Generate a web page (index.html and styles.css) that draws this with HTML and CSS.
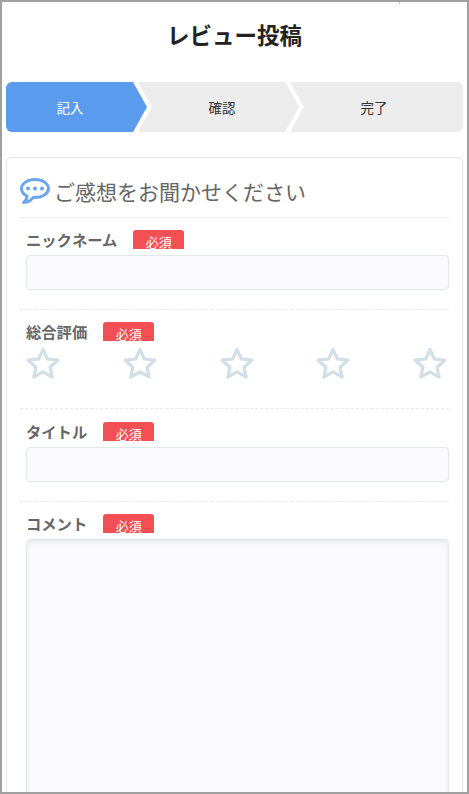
FILE: index.html
```html
<!DOCTYPE html>
<html lang="ja">
<head>
    <meta charset="UTF-8">
    <meta name="viewport" content="width=device-width, initial-scale=1.0">
    <title>レビュー投稿</title>
    <link rel="stylesheet" href="styles.css">
</head>
<body>

    <div class="page">
        <h1 class="page-title">レビュー投稿</h1>

        <ol class="steps">
            <li class="step step-first step-active">記入</li>
            <li class="step step-middle">確認</li>
            <li class="step step-last">完了</li>
        </ol>

        <form class="review-card">
            <h2 class="card-title">
                <svg class="title-icon" viewBox="0 0 30 26" width="30" height="26" aria-hidden="true">
                    <path d="M15 1.5C7.5 1.5 1.5 5.5 1.5 10.5C1.5 14 4 16.5 7 18C7 20.5 6 23 3.5 24.5C7.5 24.5 11 22.5 13 19.5L15 19.5C22.5 19.5 28.5 15.5 28.5 10.5C28.5 5.5 22.5 1.5 15 1.5Z" fill="#fff" stroke="#6aa5ee" stroke-width="3" stroke-linejoin="round"/>
                    <circle cx="8" cy="10.5" r="2" fill="#6aa5ee"/>
                    <circle cx="15" cy="10.5" r="2" fill="#6aa5ee"/>
                    <circle cx="22" cy="10.5" r="2" fill="#6aa5ee"/>
                </svg>
                ご感想をお聞かせください
            </h2>

            <div class="field">
                <div class="field-label"><label for="nickname">ニックネーム</label><span class="required">必須</span></div>
                <input class="text-input" type="text" id="nickname">
            </div>

            <div class="field field-rating">
                <div class="field-label"><label>総合評価</label><span class="required">必須</span></div>
                <div class="stars">
                    <svg class="star" viewBox="0 0 34 32"><polygon points="17,2.5 21.4,12 31.8,13.2 24.1,20.3 26.2,30 17,24.9 7.8,30 9.9,20.3 2.2,13.2 12.6,12"/></svg>
                    <svg class="star" viewBox="0 0 34 32"><polygon points="17,2.5 21.4,12 31.8,13.2 24.1,20.3 26.2,30 17,24.9 7.8,30 9.9,20.3 2.2,13.2 12.6,12"/></svg>
                    <svg class="star" viewBox="0 0 34 32"><polygon points="17,2.5 21.4,12 31.8,13.2 24.1,20.3 26.2,30 17,24.9 7.8,30 9.9,20.3 2.2,13.2 12.6,12"/></svg>
                    <svg class="star" viewBox="0 0 34 32"><polygon points="17,2.5 21.4,12 31.8,13.2 24.1,20.3 26.2,30 17,24.9 7.8,30 9.9,20.3 2.2,13.2 12.6,12"/></svg>
                    <svg class="star" viewBox="0 0 34 32"><polygon points="17,2.5 21.4,12 31.8,13.2 24.1,20.3 26.2,30 17,24.9 7.8,30 9.9,20.3 2.2,13.2 12.6,12"/></svg>
                </div>
            </div>

            <div class="field field-after-rating">
                <div class="field-label"><label for="title">タイトル</label><span class="required">必須</span></div>
                <input class="text-input" type="text" id="title">
            </div>

            <div class="field field-comment">
                <div class="field-label"><label for="comment">コメント</label><span class="required">必須</span></div>
                <textarea class="text-input comment-input" id="comment"></textarea>
            </div>
        </form>
    </div>

</body>
</html>
```
FILE: styles.css
```css
* {
    box-sizing: border-box;
}

html, body {
    height: 100%;
}

body {
    margin: 0;
    font-family: "Noto Sans CJK JP", "Noto Sans", sans-serif;
    color: #333;
    background: white;
    overflow: hidden;
}

.page {
    position: relative;
    height: 794px;
    border: 2px solid #a0a0a0;
    padding: 0 4px;
    overflow: hidden;
}

/* small tick under the top edge of the frame */
.page::before {
    content: "";
    position: absolute;
    top: 0;
    left: 397px;
    width: 1px;
    height: 2px;
    background: #c4c4c4;
}

.page-title {
    margin: 0;
    height: 80px;
    padding-top: 13px;
    font-size: 22.5px;
    line-height: 38px;
    font-weight: bold;
    color: #222;
    text-align: center;
}

/* steps overlap by 9px so the white band between the arrows stays even */
.steps {
    display: flex;
    margin: 0 0 25px;
    padding: 0;
    list-style: none;
}

.step {
    height: 50px;
    display: flex;
    align-items: center;
    justify-content: center;
    font-size: 13.5px;
    background: #ececec;
}

.step-first {
    flex: 0 0 141px;
    padding-right: 13px;
    border-radius: 6px 0 0 6px;
    clip-path: polygon(0 0, calc(100% - 14px) 0, 100% 50%, calc(100% - 14px) 100%, 0 100%);
}

.step-middle {
    flex: 0 0 161px;
    margin-left: -9px;
    padding-left: 7px;
    clip-path: polygon(0 0, calc(100% - 14px) 0, 100% 50%, calc(100% - 14px) 100%, 0 100%, 14px 50%);
}

.step-last {
    flex: 1;
    margin-left: -9px;
    padding-right: 5px;
    border-radius: 0 6px 6px 0;
    clip-path: polygon(0 0, 100% 0, 100% 100%, 0 100%, 14px 50%);
}

.step-active {
    background: #5b9bee;
    color: white;
}

.review-card {
    padding: 0 13px;
    border: 1px solid #e4e4e4;
    border-radius: 5px;
    height: 700px;
}

.card-title {
    display: flex;
    align-items: center;
    gap: 4px;
    height: 60px;
    margin: 0;
    padding-top: 7px;
    font-size: 21px;
    font-weight: normal;
    color: #666;
    border-bottom: 1px solid #eee;
}

.title-icon {
    flex: none;
}

.field {
    padding: 12px 0 19px 6px;
    border-bottom: 1px dashed #e8e8e8;
}

.field-rating {
    padding-bottom: 29px;
}

.field-after-rating {
    padding-top: 13px;
}

.field-comment {
    border-bottom: none;
}

.field-label {
    display: flex;
    align-items: flex-start;
    gap: 16px;
    height: 25px;
}

.field-label label {
    font-size: 15.3px;
    line-height: 18px;
    font-weight: bold;
    color: #666;
}

.required {
    width: 51px;
    height: 19px;
    padding-top: 4px;
    font-size: 13px;
    line-height: 15px;
    color: white;
    text-align: center;
    background: #f25055;
    border-radius: 3px 3px 0 0;
}

.text-input {
    display: block;
    width: 100%;
    height: 35px;
    padding: 0 10px;
    background: #fafafe;
    border: 1px solid #e2e7ea;
    border-radius: 4px;
    outline: none;
}

.comment-input {
    height: 300px;
    resize: none;
    box-shadow: inset 0 2px 4px rgba(0, 0, 0, 0.08);
}

.stars {
    display: flex;
    justify-content: space-between;
    padding-right: 2px;
}

.star {
    display: block;
    width: 34px;
    height: 32px;
    fill: none;
    stroke: #d3dfe6;
    stroke-width: 3.2;
    stroke-linejoin: round;
}
```
